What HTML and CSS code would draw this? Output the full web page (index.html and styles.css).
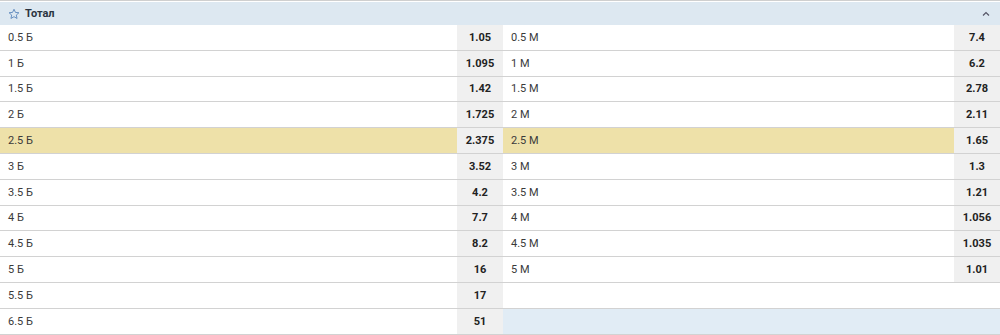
FILE: index.html
```html
<!DOCTYPE html>
<html lang="ru">
<head>
<meta charset="utf-8">
<link rel="stylesheet" href="styles.css">
</head>
<body>
<div class="market">
  <div class="market-head">
    <div class="title">
      <svg class="star" width="12" height="12" viewBox="0 0 24 24"><path d="M12 2.5l2.9 6.3 6.9.7-5.2 4.6 1.5 6.8L12 17.4l-6.1 3.5 1.5-6.8-5.2-4.6 6.9-.7z" fill="none" stroke="#5a86bb" stroke-width="1.8" stroke-linejoin="round"/></svg>
      <span>Тотал</span>
    </div>
    <svg class="chev" width="8" height="6" viewBox="0 0 8 6"><path d="M1 4.5L4 1.5l3 3" fill="none" stroke="#556" stroke-width="1.2"/></svg>
  </div>
  <div class="rows">
    <div class="row"><div class="cell"><span class="lbl">0.5 Б</span><span class="odd">1.05</span></div><div class="cell"><span class="lbl">0.5 М</span><span class="odd">7.4</span></div></div>
    <div class="row"><div class="cell"><span class="lbl">1 Б</span><span class="odd">1.095</span></div><div class="cell"><span class="lbl">1 М</span><span class="odd">6.2</span></div></div>
    <div class="row"><div class="cell"><span class="lbl">1.5 Б</span><span class="odd">1.42</span></div><div class="cell"><span class="lbl">1.5 М</span><span class="odd">2.78</span></div></div>
    <div class="row"><div class="cell"><span class="lbl">2 Б</span><span class="odd">1.725</span></div><div class="cell"><span class="lbl">2 М</span><span class="odd">2.11</span></div></div>
    <div class="row hl"><div class="cell"><span class="lbl">2.5 Б</span><span class="odd">2.375</span></div><div class="cell"><span class="lbl">2.5 М</span><span class="odd">1.65</span></div></div>
    <div class="row"><div class="cell"><span class="lbl">3 Б</span><span class="odd">3.52</span></div><div class="cell"><span class="lbl">3 М</span><span class="odd">1.3</span></div></div>
    <div class="row"><div class="cell"><span class="lbl">3.5 Б</span><span class="odd">4.2</span></div><div class="cell"><span class="lbl">3.5 М</span><span class="odd">1.21</span></div></div>
    <div class="row"><div class="cell"><span class="lbl">4 Б</span><span class="odd">7.7</span></div><div class="cell"><span class="lbl">4 М</span><span class="odd">1.056</span></div></div>
    <div class="row"><div class="cell"><span class="lbl">4.5 Б</span><span class="odd">8.2</span></div><div class="cell"><span class="lbl">4.5 М</span><span class="odd">1.035</span></div></div>
    <div class="row"><div class="cell"><span class="lbl">5 Б</span><span class="odd">16</span></div><div class="cell"><span class="lbl">5 М</span><span class="odd">1.01</span></div></div>
    <div class="row"><div class="cell"><span class="lbl">5.5 Б</span><span class="odd">17</span></div><div class="cell empty"></div></div>
    <div class="row"><div class="cell"><span class="lbl">6.5 Б</span><span class="odd">51</span></div><div class="cell empty blue"></div></div>
  </div>
</div>
</body>
</html>
```

FILE: styles.css
```css
* { box-sizing: border-box; }
html, body { margin: 0; padding: 0; background: #fff; }
body {
  font-family: Roboto, "Liberation Sans", Arial, sans-serif;
  font-size: 11px;
  color: #333;
}
.market {
  width: 1000px;
  border-top: 1px solid #cfcfcf;
}
.market-head {
  height: 23px;
  margin-top: 1px;
  background: #dde8f1;
  display: flex;
  align-items: center;
  justify-content: space-between;
  padding: 0 10px 0 8px;
}
.title {
  display: flex;
  align-items: center;
  gap: 5px;
  font-weight: bold;
  color: #2b3440;
}
.rows { display: flex; flex-direction: column; }
.row {
  display: grid;
  grid-template-columns: 503px 497px;
  height: 25.8px;
  border-bottom: 1px solid #d2d2d2;
}
.cell {
  display: flex;
  align-items: stretch;
}
.lbl {
  flex: 1;
  display: flex;
  align-items: center;
  padding-left: 8px;
  color: #3a3a3a;
}
.odd {
  width: 46px;
  display: flex;
  align-items: center;
  justify-content: center;
  background: #f0f0f0;
  font-weight: bold;
  color: #222;
}
.hl .lbl { background: #eee1a9; }
.cell.blue { background: #e1ecf5; }
```
